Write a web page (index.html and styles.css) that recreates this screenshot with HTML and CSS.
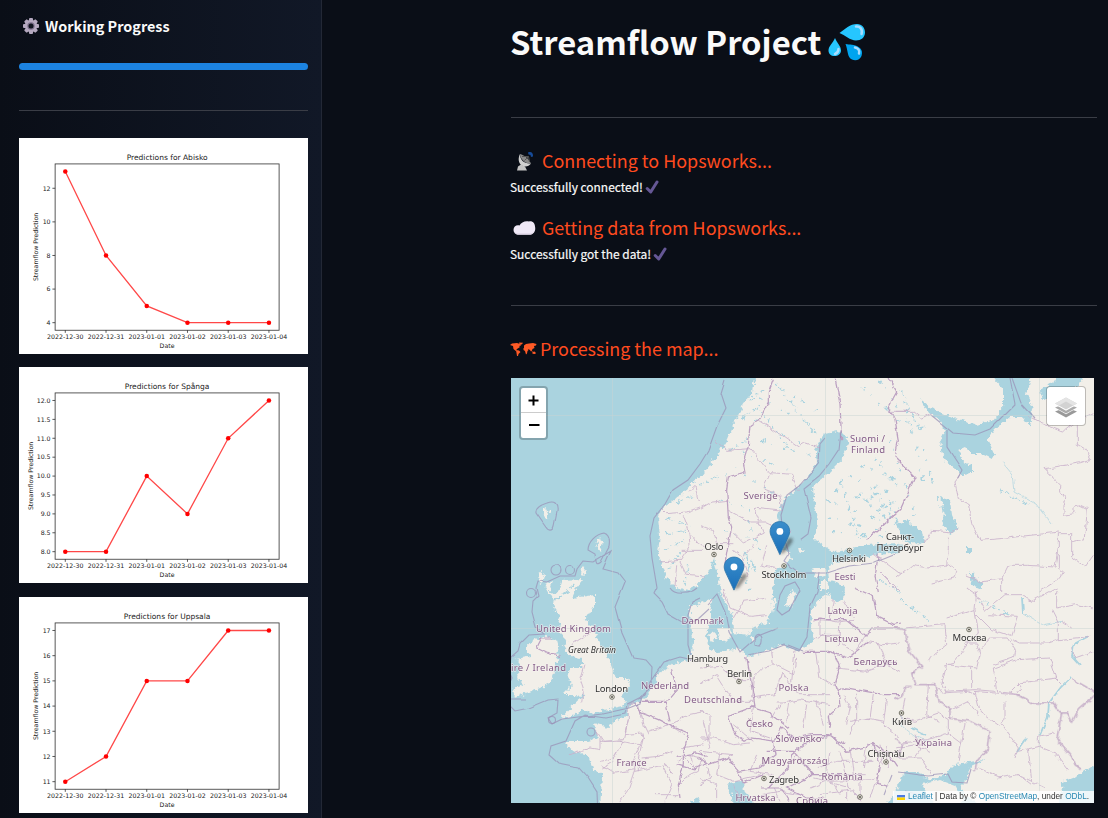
FILE: index.html
```html
<!DOCTYPE html>
<html lang="en">
<head>
<meta charset="utf-8">
<title>Streamflow Project</title>
<link rel="stylesheet" href="styles.css">
</head>
<body>
<div class="app">
  <aside class="sidebar">
    <h2 class="side-title">
      <svg class="gear" viewBox="0 0 18 18"><g fill="#b5a9c0"><rect x="7" y="1" width="4" height="16" rx="1"/><rect x="7" y="1" width="4" height="16" rx="1" transform="rotate(45 9 9)"/><rect x="7" y="1" width="4" height="16" rx="1" transform="rotate(90 9 9)"/><rect x="7" y="1" width="4" height="16" rx="1" transform="rotate(135 9 9)"/><circle cx="9" cy="9" r="6.2"/></g><circle cx="9" cy="9" r="3.7" fill="#7e728d"/><circle cx="9" cy="9" r="2.5" fill="#10141f"/></svg>
      <span>Working Progress</span>
    </h2>
    <div class="progress"></div>
    <hr class="rule side-rule">
    <div class="charts" id="charts"></div>
  </aside>
  <main class="main">
    <h1 class="title"><span>Streamflow Project</span>
      <svg class="drops" viewBox="0 0 38 38"><path d="M11.500 10C17 6 22 1 29 1c5 0 8 4 8 8.500c0 5-4 8-9 8C22 17.500 17 12 11.500 10z" fill="#26c6ff"/><path d="M7 15c-2 5-6.500 8-6.500 12.500C.5 31 3 33 6.500 33S13 31 13 27.500C13 23 9 20 7 15z" fill="#26c6ff"/><path d="M17.500 21c4 1 9 0 13 3 4 2.500 4 6 3 9-1.500 4-6 5-9.500 3.500-5-2-4-10-6.500-15.500z" fill="#00a4ef"/><path d="M28 3.500c4-.5 7 3 5.500 7.500M10.500 26c0 2.500-1 4-3.500 5M27 24.500c3 .5 5 3 4 6" fill="none" stroke="#a6dcff" stroke-width="2.500" stroke-linecap="round"/></svg>
    </h1>
    <hr class="rule">
    <section class="steps">
      <h3 class="step"><svg class="ico" viewBox="0 0 28 22"><path d="M6 20.500l1-4 3-2 4 2 2 4z" fill="#c4c4c4"/><path d="M9 4c0 6 4 10 11 9.500-2 3-6 4-9 2C7 13 7 8 9 4z" fill="#d0d0d0"/><path d="M9 4c4 1 8 4 11 9.500C14 14 9 9 9 4z" fill="#8b8b8b"/><path d="M11 6.500L17.500 6.500l1 5.500M17.500 6.500l-4 4" stroke="#555" fill="none"/><path d="M17 2.500c3-1.500 5.500.5 5 4l-2 .5-.5-2-2-.5z" fill="#164b99"/></svg><span>Connecting to Hopsworks...</span></h3>
      <p class="status"><span>Successfully connected!</span><svg class="check" viewBox="0 0 14 14"><path d="M2.200 8.500l3.500 3.500L12 2" fill="none" stroke="#655795" stroke-width="3" stroke-linecap="round" stroke-linejoin="round"/></svg></p>
      <h3 class="step second"><svg class="ico" viewBox="0 0 28 22"><path d="M2.500 13c0-3.500 3-5.500 6-4.500C10 5.500 14 3.500 18 4.500c3-1 6 1.500 6 5 1 4-1 8-5 8H8c-3 .5-5.500-1.500-5.500-4.500z" fill="#f0e9f7"/><path d="M4 15.500c2 1.500 4 .5 6 .8h9c2 0 3-1 4-2-1 3-2.500 3.500-5 3.500H8c-2 0-3.500-.8-4-2.300z" fill="#dfd6e8"/></svg><span>Getting data from Hopsworks...</span></h3>
      <p class="status"><span>Successfully got the data!</span><svg class="check" viewBox="0 0 14 14"><path d="M2.200 8.500l3.500 3.500L12 2" fill="none" stroke="#655795" stroke-width="3" stroke-linecap="round" stroke-linejoin="round"/></svg></p>
    </section>
    <hr class="rule">
    <h3 class="step map-step"><svg class="world" viewBox="0 0 27 16"><g fill="#ff5a26"><path d="M0 4l2-1.500 5-.5 3 1 1 1.500-2 .5 1 1-3 2-1 1.500 2 1-1 .500L3.500 8 3 5zM9 1.500l4 .2-1 1.500-2 .8zM6 9l3 .5 1.500 1.500-2 2-.5 2H7z"/><path d="M14 4.500l2-1.500 3-.500 4-.5 3.500 1-.5 1.500-2 .5.5 2-2 1-.5 1.500-1 1-1-1.500-2-1-.5 1.500-1-2-2.500 0zM13.500 7l3.500-.2 1.500 2.200-1 1-.5 2.500-1 1-1-3.500-1.500-1zM22.500 11l2-.5 1.500 1.500-1 1-2.500-.2zM20 9.500l3 1-.5.7z"/></g></svg><span>Processing the map...</span></h3>
    <div class="map">
      <svg class="tiles" viewBox="511 378 583 425">
        <defs>
          <filter id="coast" filterUnits="userSpaceOnUse" x="505" y="372" width="595" height="437"><feTurbulence type="fractalNoise" baseFrequency=".22" numOctaves="3" seed="4"/><feDisplacementMap in="SourceGraphic" scale="7" xChannelSelector="R" yChannelSelector="G"/><feGaussianBlur stdDeviation=".3"/></filter>
          <filter id="rough" filterUnits="userSpaceOnUse" x="505" y="372" width="595" height="437"><feTurbulence type="fractalNoise" baseFrequency=".14" numOctaves="2" seed="9"/><feDisplacementMap in="SourceGraphic" scale="5" xChannelSelector="R" yChannelSelector="G"/><feGaussianBlur stdDeviation=".25"/></filter>
          <filter id="wave" filterUnits="userSpaceOnUse" x="505" y="372" width="595" height="437"><feTurbulence type="fractalNoise" baseFrequency=".06" numOctaves="1" seed="2"/><feDisplacementMap in="SourceGraphic" scale="3" xChannelSelector="R" yChannelSelector="G"/><feGaussianBlur stdDeviation=".25"/></filter>
          <filter id="soft" x="-50%" y="-50%" width="200%" height="200%"><feGaussianBlur stdDeviation="1.800"/></filter>
          <linearGradient id="pinfill" x1="0" y1="0" x2="0" y2="1"><stop offset="0" stop-color="#3a8ecb"/><stop offset="1" stop-color="#1b6fb9"/></linearGradient>
          <g id="pin"><path d="M12 40L22 22c4-3 8-1 5 4L18 38z" fill="#222" opacity=".5" filter="url(#soft)"/><path d="M12.500.7C5.900.7.700 5.900.700 12.600c0 2.200.6 4 1.600 6.200L12.500 40.500l10.200-21.700c1-2.200 1.600-4 1.600-6.200C24.300 5.900 19.100.7 12.500.7z" fill="url(#pinfill)" stroke="#2d75aa"/><circle cx="12.500" cy="12.500" r="4.100" fill="#fff"/></g>
          <g id="town"><circle r="2.300" fill="#f2efe9" stroke="#555548" stroke-width=".8"/><circle r="1" fill="#555548"/></g>
        </defs>
        <rect x="511" y="378" width="583" height="425" fill="#aad3df"/>
        <g filter="url(#coast)" fill="#f2efe9">
          <!-- Scandinavia and the continent -->
          <path d="M756 370L753 392 743 405 735 422 728 439 720 452 707 469 702 476 692 483 688 489 675 499 662 509 658 519 660 535 658 552 662 565 667 579 675 587 688 590 698 585 705 575 711 569 714 558 717 572 721 592 725 601 732 615 733 633 750 635 752 628 767 623 772 605 775 572 787 565 792 557 783 549 780 535 778 515 783 502 797 487 810 475 817 462 815 450 825 434 837 431 848 437 847 449 840 462 827 475 813 487 815 505 817 522 815 539 823 545 833 552 850 550 867 545 882 544 898 543 905 547 900 552 877 554 857 560 833 562 828 569 829 580 837 582 845 588 844 600 836 603 828 594 817 602 812 610 811 628 814 640 800 651 790 648 780 645 760 653 747 656 740 648 727 650 720 653 709 648 705 635 710 625 710 612 712 602 713 597 704 602 689 607 691 621 693 641 692 655 687 660 672 665 660 671 655 685 645 698 630 705 627 716 615 721 608 728 600 725 595 723 598 738 588 741 568 741 566 744 572 751 588 755 593 768 602 775 600 810 1105 810 1105 370z"/>
          <!-- Britain, Ireland and small islands -->
          <path d="M545 585L553 581 550 592 557 595 562 580 583 579 577 587 572 598 595 595 595 605 585 620 593 628 600 645 608 656 613 671 615 678 628 678 630 685 622 695 627 701 623 706 605 710 592 713 582 710 572 716 560 719 577 701 585 696 572 695 563 695 573 685 568 678 570 668 582 668 582 658 569 656 563 646 567 640 558 631 560 618 555 610 552 598z"/>
          <path d="M533 640L545 636 556 641 559 652 555 666 552 682 541 688 528 693 515 697 513 690 524 684 517 677 522 667 516 659 531 656 525 649z"/>
          <path d="M600 538l3 4-2 8-3 1-2-5zM582 567l5 2-2 6-4-1zM543 509l4-1 2 4-1 7-2 0-3-5zM540 572l5 3-3 9-3-2zM708 635l6-3 3 7-5 2zM718 628l12 0 2 8-6 6-6-3zM785 605l6-14 5 3-6 12zM769 613l5-14 2 0-4 14zM812 568l13 0 1 7-11 2zM820 581l9 0-1 8-8 1zM798 548l5 0 1 3-5 2zM752 637l4 1-1 4-4-2z"/>
        </g>
        <g filter="url(#coast)" fill="#aad3df">
          <!-- White Sea -->
          <path d="M988 370L1003 389 1003 405 995 420 975 425 958 420 935 410 920 399 928 412 942 422 945 432 940 442 945 462 955 469 963 475 972 474 972 465 963 462 958 450 965 447 972 454 982 454 992 459 995 454 988 439 995 429 1010 417 1023 417 1030 427 1033 409 1027 395 1032 370z"/>
          <!-- Cheshskaya Bay, Onega, Ladoga -->
          <path d="M1058 370L1056 380 1040 390 1042 398 1052 403 1075 390 1088 372zM940 497L950 500 952 515 958 529 950 535 942 522 945 515zM898 524L907 520 922 532 924 542 915 545 902 539zM966 548l6 0 0 4-6 0zM970 571l12 14 0 4-10-4z"/>
          <!-- Black Sea, Azov, Adriatic, Caspian -->
          <path d="M885 810L895 792 905 772 918 772 932 781 945 774 955 764 985 760 970 767 967 778 960 785 965 795 985 810zM1058 810L1063 782 1078 776 1097 763 1097 810zM728 783l14-2 3 12 15 17-26 0zM690 801l8-4 6 12-18 0z"/>
        </g>
        <path filter="url(#rough)" fill="#f2efe9" d="M921 784l18-5 16 6 9 15-10 8-20-3-6-9z"/>
        <g filter="url(#coast)" fill="none" stroke="#aad3df" class="lakes">
          <path d="M760 398l40 22M755 420l48 25M762 440l50 16M742 452l45 18M775 384l45 28M716 480l25-15M745 475l30 20M720 500l30 10M748 520l12 30M725 530l45 15M738 560l12 30M862 388l40 35M880 380l30 45M905 400l20 90M890 440l25 75M860 440l40 50"/>
          <path stroke-width="2.200" d="M826 500l55 20M828 518l62 15M835 490l60 20M850 475l50 35M862 466l38 14M870 505l28 18M832 532l50 5M923 450l20 65M906 410l18 20M870 497l27 6M875 485l20 40M860 495l35 30M885 490l12 30"/>
          <path stroke-width="1.200" d="M666 518l25 8M664 534l24-4M664 550l22-10M675 503l19-7M668 570l14-20M684 586l5-24M700 485l20-10M730 450l20-12M742 418l18-12M750 400l14-10M880 580l20 12M900 600l30 20M1000 490l30 15M980 600l30 15M780 388l35 45M760 410l30 40M900 390l20 40M840 480l20 60" stroke-dasharray="5 2 2 4"/>
          <path stroke-width="1.600" d="M730 568l6 12M745 553l5 20M752 560l4 13M736 572l5 7" stroke-dasharray="none"/>
          <path stroke-width="1.600" d="M551 590l7 9M549 600l12-2M557 588l-4 20M575 585l-20 15" stroke-dasharray="6 3"/>
        </g>
        <g fill="none" stroke="#aad3df">
          <path stroke-width="1.800" filter="url(#rough)" d="M1089 636l-15 8-2 12 8 9M1071 677l-10 10-12 16-1 12-8 20M1027 738l-10 14M912 728l14 7M1022 598l1 15"/>
          <path stroke-width=".7" filter="url(#rough)" d="M1002 462l10 12 2 18 22 12 15 20M1023 613l20 12 20-4M902 711v15l12 10 14 5"/>
        </g>
        <!-- internal divisions, drawn tile by tile -->
        <g filter="url(#rough)" fill="none" class="region">
          <g transform="translate(505 372) scale(.333333)"><path d="M465 405l20 20 60-5 40-15M555 355l15-15 10 50M535 430l15 40 5 50-30 45-60 5M550 480l30 35 20 10M530 535l60 0M525 570l20 40 55 5M515 580l-5 60"/></g>
          <g transform="translate(700 372) scale(.333333)"><path d="M45 205l35 30 70-5M175 145l70 45 50 35 20-12 45 15M150 230l60 72 65 5 20 50M210 305l-20 45 50 20 10 50M85 385l-50 5-35 20M85 415l65 35 50 0 30 15M250 418l-90-10 30 75-60 30-30-30M0 460l40 15 10 40 50 0M100 535l25 20 20 60M160 520l-30 35M270 475l-30 55M200 520l-15 60 45 10M565 118l60 0M520 545l80 60M540 600l60 60"/></g>
          <g transform="translate(895 372) scale(.333333)"><path d="M0 118l55 0 25 20 30-15M400 130l35 20 70 27 15-12 75-40M547 160l0 57 25 15 15 30-30 10-110 18 20 20 30 30 0 20 15 20-5 20 0 30 30-5 0-20 20-5 20 10-5 60-5 30-35 10M195 310l-15 20 10 50 30 15 10 60 25 50 60-5 180-20M190 470l-20 10-60-5-20 35M160 500l0 30-5 50M0 620l50-40 50 8 60-10 25 20-5 20-70 15M210 610l50 20 60-10 20-40 60 0 80 5 10-60M490 485l0 100 15 15-10 20-65 40M490 485l40 0 0 70 40 30 25-35M320 620l0 40"/></g>
          <g transform="translate(505 588) scale(.333333)"><path d="M240 230l-15 50 10 30-5 30M200 170l60-40M275 430l20 30 60-5 15-60 0-45M195 500l60-20 30 5 0-35M285 460l70 0M285 520l40-10 30-50M325 520l-30 20M345 460l60 10 10-20-5-15-50 5 10-45M405 470l-20 45 5 30-60 10-40-25M390 545l-20 60-30 40M390 550l90-20 20 25M400 350l20 70 10 20M415 450l-15 60 0 40M430 430l60-20 50 30M500 490l-40 15-50 5M600 370l-50 10-50 30M525 480l70-10M520 520l30-20 40 10-10 40-40 20-20 20M450 620l70 0M540 510l30 30M560 500l10 50M470 530l30 60-20 50"/></g>
          <g transform="translate(700 588) scale(.333333)"><path d="M70 0l20 60 60 25 50-5M100 90l30-50 70-10M0 240l60-5 50 40 40 0M0 290l50-30 50 80 60 0M0 370l30 10 0 60-20 20M10 400l20 80M160 270l30-30 30-10-5-40M225 230l60 30 5-50M160 270l-5 60 70-10 20-70M245 250l50 70 100 0M285 190l-10 90M350 190l10 80 50 30M230 345l20 0 50-10 90 15M240 350l-25 40M270 340l-10 60M320 350l-10 70M350 340l20 70M100 410l60 50M160 360l-10 70 60 20M0 450l40 0 60 20 50-5M0 490l100 10M10 510l20 60-30 20M60 490l-10 70 50 20 80-20M0 570l50 20 0 50M100 590l20 50M340 100l20-8 50 10 50-5M360 92l0 50 60 0M420 100l-5 80M375 135l-30 20M400 150l60 40M430 40l30 50M400 35l-10 60M500 140l-20 30-30 40M500 160l50 10 50-5M540 170l20 60 40 20M410 240l90 10 90-30M430 320l20 40-10 50M470 320l0 70-20 50M520 320l-10 70-60 10M560 330l-10 80 50 40M500 390l50 10M330 600l50-20 70 20M390 490l-10 60 40 70M420 490l20 70 60 0M450 480l10 80M500 470l-10 70M350 540l60-20 110 0M340 570l50 10 130-5M440 560l0 80M480 560l0 70M530 570l-20 60M360 620l100-15 20 35M180 620l60-10 60 10M220 600l20 40M290 500l-30 40M170 500l-20 50 70 10M100 500l-40 20M560 470l5 70M540 470l10 60M515 480l30 20 60-10"/></g>
          <g transform="translate(895 588) scale(.333333)"><path d="M30 120l120-10 5 60-40 30-15 20M155 90l85-25 10 70-30 30-45 60-30 10M245 80l45 45 60 20 20-60-90-5M245 10l-5 55M240 10l30 60 60-50 50 0M215 0l30 20M380 20l30 20 75-40M485 60l0-50M485 60l60-10 50 10M210 165l35 0 10 35-10 40-90-10M255 185l35-35 50 0 20 30-5 30-60 20M295 240l70-25M295 240l10 70 70 10M155 230l-15 60 10 20 90-5 60 5M230 240l0 60M350 155l20 10 90 0M460 165l30-10 0-50-20-40M490 155l100-10M500 100l30 20M530 180l10 30 55-20M365 215l100-5 20 60-110 15-30 30M370 285l10 15-15 20M480 270l20 20M365 320l-130-10M240 310l15 60 60 45M130 300l0 0 10 15 80-5 20 10M100 290l-5 90 35 20M30 330l-10 60 40 10 70-25 30 20 0 40-60 20-80 10M60 440l20 40-20 30M160 435l40 30 10-60M200 465l-10 50M160 370l60-30 30 40M330 390l-10 20 50 70-10 30M330 390l0-50M370 490l60-15 0-30 50-10M430 475l50 20 40 50M400 480l10 100M310 570l60-10 80 40M370 560l40 30M250 540l70 30M0 480l60-10 45 20M0 510l80 0 30 50"/></g>
        </g>
        <g filter="url(#rough)" fill="none" class="country">
          <g transform="translate(700 372) scale(.333333)"><path d="M220 20l-15 40 0 30-25 50-30 20-5 60-15 50 5 30-50 15-5 40 5 80 10 30-10 50-10 60 20 40M405 20l15 75 5 110M560 0l30 60-25 45 20 40 10 60-10 50 60 60-45 100-100 90M535 545l-10 70 10 45"/></g>
          <g transform="translate(505 588) scale(.333333)"><path d="M165 205l-40-10-30-15 15-30 30 0M370 345l20 0 20 30 50 20 40 20 50 20-15 60 0 35-15 60 5 40M405 340l80 0 30-35-15-60M480 335l15 65M515 530l50 15 40-20M515 505l60-10 30 10"/></g>
          <g transform="translate(700 588) scale(.333333)"><path d="M140 205l10 60 15 90-80 30 20 55 30 20 20-10 70 10 20-40 40 30 50-10 50 0 50 30M150 355l60 20 60 45M390 420l-5-35 35-30-5-40-10-25 15-50-20-50M305 190l80 0 60 20 60-50M340 95l100 0 60 50M465 0l55 25 10 60 50 25 20-5M500 140l15-20 85 0M410 310l30-10 110 20 50 0M390 440l50 50 60-15 20-10 50 40 20 30M215 450l10 50-50 40-60 10-30-40-60 20-30-20M275 500l50-40 70-20M275 500l-10 40-60 60M340 560l-80 40 60 30 50 0M520 465l20 60-10 60 35 10M200 490l80 0 60 70 100 0M110 550l20 35 60-25M180 600l60 0 30 40"/></g>
          <g transform="translate(895 588) scale(.333333)"><path d="M0 120l30 5 10 60 40 50-30 20 10 35 60 0 10 50 35 20 0 30 60 10 60 30-5 50-35 40-5 30M0 335l20-10 10-30 20 0M365 320l50 25 60 0 20 30 20 0 15 30 20-40 35-30 20-20-70-40M60 255l-10 0M500 375l-15 80 45 50 10 25 20 15M0 450l20 20-10 40"/></g>
        </g>
        <g filter="url(#wave)" fill="none" class="maritime">
          <path d="M725 380l-4 13 5 15-9 18-9 25-8 13-12 16-15 10-8 14-11 14-4 18 2 22 5 30-3 6 8 8 6 12 14 8 14-1 13-12M547 503c8-3 11 1 10 8l-3 15c-2 6-6 5-9 0l-9-13c-1-5 5-8 11-10zM604 533c6 2 6 8 5 14l-8 15c-6 5-5-2-6-8l-7-4c0-8 8-16 16-17M593 562l-10-1-6 8-2 7-15 0-13 6-9-1-2 7 2 8-5 5-1 11 4 15 8 7-15 1-9 9-2 7-7 6-2 14 3 7-6 12-2 10 11 11 14-3 19-8 10-1-1 14-9 5 4 6 10-5 40-5 27-6 12-5 2-8 8-8 1-20-6-7-13-2-11-25-7-26 10-25-7-9-15-4 5-12 3-6zM511 699l14 0M825 438l-5 6-1 18-13 16-7 8-12 9-6 20 2 20 6 18-5 8 15 12 28 0 22-7 25-3 22-9M841 431l-2 18-10 15-10 12-15 12 7 30-3 16-8 6M778 628l-20 8-18 16-11-20-4-20-8-18-9 10M780 595l-3 15 5 5 8-5 10-20-5-8-10 4zM820 572l-3 20-7 15-3 30-8 14-15-6-15 6-22 4M693 660l-13-3-16 5-14 20-5 13-18 9-2 10-20 4-20-3-10 6-9 20-15 5-2 9 9 8 20 4 10 11 9 14 1 25M755 640c0-6 5-8 7-2 1 8-3 10-7 6zM691 655l-3-10 0-30 4-13 8-4M788 645l15 6"/>
          <circle cx="556" cy="570" r="5"/><circle cx="570" cy="570" r="4.500"/><circle cx="531" cy="593" r="4.500"/><circle cx="552" cy="720" r="3.500"/><circle cx="591" cy="732" r="4"/>
          <path d="M670 588c5 8 20 6 27 0M1010 378l5 26-25 25-15 6-22-2-22-18M947 430l0 17 15 23-4 8M1012 378l9 25 14 15M898 772l30 4 20-2 4 8 15 1 4-14M905 791l25 7M892 775l-8 20"/>
        </g>
        <g stroke="#ccd5d2" stroke-width=".7" opacity=".7"><path d="M612.500 378V803M825.500 378V803M1039.500 378V803M511 415.500H1094M511 628.500H1094"/></g>
        <g class="lbl place">
          <text x="850" y="441.500" textLength="35">Suomi /</text><text x="851" y="452.500" textLength="34">Finland</text><text x="743.500" y="499" textLength="34">Sverige</text><text x="834.500" y="579.500" textLength="21">Eesti</text><text x="827.500" y="613.500" textLength="30">Latvija</text><text x="824.500" y="641.500" textLength="34">Lietuva</text><text x="853.500" y="664.500" textLength="44">Беларусь</text><text x="681.500" y="624" textLength="42">Danmark</text><text x="536" y="632" textLength="75">United Kingdom</text><text x="511" y="670.500" textLength="55">ire / Ireland</text><text x="641" y="689" textLength="48">Nederland</text><text x="684" y="703" textLength="58">Deutschland</text><text x="778.500" y="691" textLength="30">Polska</text><text x="746" y="726.500" textLength="27">Česko</text><text x="775.500" y="742" textLength="46">Slovensko</text><text x="761.500" y="763.500" textLength="66">Magyarország</text><text x="821.500" y="779.500" textLength="41">România</text><text x="735.500" y="801" textLength="40">Hrvatska</text><text x="796" y="804" textLength="32">Србија</text><text x="616.500" y="765.500" textLength="30">France</text><text x="915" y="745.500" textLength="37">Україна</text>
        </g>
        <g class="lbl city">
          <text x="704.500" y="549.500" textLength="19">Oslo</text><text x="761.500" y="577.500" textLength="45">Stockholm</text><text x="832" y="561.500" textLength="34">Helsinki</text><text x="886" y="540" textLength="28">Санкт-</text><text x="876.500" y="551" textLength="47">Петербург</text><text x="687" y="662" textLength="41">Hamburg</text><text x="727" y="676.500" textLength="25">Berlin</text><text x="595" y="692" textLength="33">London</text><text x="769" y="782.500" textLength="30">Zagreb</text><text x="867.500" y="757" textLength="37">Chișinău</text><text x="892" y="724.500" textLength="20">Київ</text><text x="952.500" y="640.500" textLength="34">Москва</text><text x="568" y="652.500" textLength="48" class="isle">Great Britain</text>
        </g>
        <use href="#town" x="714" y="554.500"/><use href="#town" x="784" y="566"/><use href="#town" x="849.500" y="550.500"/><use href="#town" x="739" y="681.500"/><use href="#town" x="612" y="697"/><use href="#town" x="764" y="778.500"/><use href="#town" x="886" y="762"/><use href="#town" x="901.500" y="713"/><use href="#town" x="969" y="629.500"/><use href="#town" x="860" y="797"/><rect x="706.500" y="664.500" width="2" height="2" fill="#f2efe9" stroke="#777" stroke-width=".6"/>
        <use href="#pin" transform="translate(769.500 521) scale(.83)"/><use href="#pin" transform="translate(723.600 556.500) scale(.83)"/>
      </svg>
      <div class="zoom"><span class="zbtn"><svg viewBox="0 0 25 25"><path d="M7.500 12.500h10M12.500 7.500v10" stroke="#000" stroke-width="2"/></svg></span><span class="zbtn"><svg viewBox="0 0 25 25"><path d="M8 12h10.500" stroke="#000" stroke-width="2"/></svg></span></div>
      <div class="layers"><svg viewBox="0 0 26 26"><path d="M2 17.500l11 6 11-6-11-4z" fill="#999"/><path d="M2 14l11 6.200L24 14l-11-4z" fill="#fff"/><path d="M2 13.500l11 6 11-6-11-4z" fill="#aaa"/><path d="M2 10.500l11 6.200 11-6.200z" fill="#fff"/><path d="M2 9.500l11-6 11 6-11 6z" fill="#d2d2d2"/><path d="M2 9.500l11-6 11 6-4 2-7-4-7 4z" fill="#e4e4e4"/></svg></div>
      <div class="credit"><svg class="flag" viewBox="0 0 8 5"><path fill="#4c7be1" d="M0 0h8v2.500H0z"/><path fill="#ffd500" d="M0 2.500h8V5H0z"/></svg><span><a>Leaflet</a> | Data by © <a>OpenStreetMap</a>, under <a>ODbL</a>.</span></div>
    </div>
  </main>
</div>
<script src="charts.js"></script>
</body>
</html>
```
FILE: styles.css
```css
* { box-sizing: border-box; }
body { margin: 0; background: #0a0e17; color: #fafafa; font-family: "Noto Sans CJK SC", "Open Sans", sans-serif; }
h1, h2, h3, p { margin: 0; }
.app { display: flex; height: 818px; overflow: hidden; }
.sidebar { flex: none; width: 322px; padding: 13px 13px 0 19px; background: linear-gradient(90deg, #0a0e17, #111827); border-right: 1px solid #232836; }
.side-title { display: flex; align-items: center; gap: 5px; height: 26px; padding-left: 3px; font-size: 14.400px; line-height: 26px; font-weight: 700; white-space: nowrap; }
.gear { width: 18px; height: 18px; }
.progress { height: 7px; margin-top: 24px; border-radius: 4px; background: #1c83e1; }
.rule { height: 1px; margin: 0; border: 0; background: #3a3d46; }
.side-rule { margin-top: 40px; }
.charts { display: flex; flex-direction: column; gap: 13px; padding-top: 27px; }
.chart { display: block; width: 289px; height: 216px; background: #fff; font: 13.890px "DejaVu Sans", sans-serif; fill: #222; }
.chart:last-child { margin-top: 1px; }
.chart .heading { font-size: 16.670px; }
.chart .frame { fill: none; stroke: #333; stroke-width: 1.800; }
.chart .line { fill: none; stroke: #f00; stroke-width: 2.900; stroke-opacity: .72; }
.chart .dot { fill: #f00; }
.main { flex: 1; padding: 0 11px 0 189px; }
.title { display: flex; align-items: center; gap: 7px; height: 117px; padding-bottom: 33px; font-size: 32.800px; line-height: 50px; font-weight: 700; white-space: nowrap; }
.title span { margin: -3px 0 0 -1px; }
.drops { width: 38px; height: 38px; }
.steps { height: 187px; padding-top: 30px; }
.step { display: flex; align-items: center; height: 26px; font-size: 17.930px; line-height: 26px; font-weight: 400; color: #ff4b1f; white-space: nowrap; }
.step span { margin-top: -2px; }
.step.second { margin-top: 15px; }
.ico { width: 28px; height: 22px; margin-right: 3px; }
.world { width: 27px; height: 16px; margin: 0 3px 0 -1px; }
.map-step { margin-top: 30px; }
.status { display: flex; align-items: center; gap: 2px; height: 26px; margin-left: -1px; font-size: 11.950px; line-height: 26px; white-space: nowrap; -webkit-text-stroke: .2px #fafafa; }
.check { width: 14px; height: 14px; }
.map { position: relative; width: 583px; height: 425px; margin-top: 16px; overflow: hidden; }
.tiles { display: block; width: 583px; height: 425px; }
.lakes { stroke-width: 1.500; stroke-dasharray: 3 7 1 12 2 5 4 14; }
.region { stroke: #c9b1cb; stroke-width: 2.500; }
.country { stroke: #bb9fc1; stroke-width: 3.700; }
.maritime { stroke: #9a91b7; stroke-opacity: .75; stroke-width: 1.100; }
.lbl { font: 9.500px "Noto Sans", sans-serif; paint-order: stroke; stroke: #f6f3ef; stroke-opacity: .65; stroke-width: 1.500px; stroke-linejoin: round; }
.place { fill: #835b87; }
.city { fill: #333; }
.isle { font-style: italic; font-size: 8.500px; }
.zoom { position: absolute; left: 8px; top: 8px; width: 29px; height: 54px; border: 2px solid rgba(0, 0, 0, .22); border-radius: 4px; background: #fff; background-clip: padding-box; }
.zbtn { display: block; height: 25px; }
.zbtn:first-child { height: 24px; }
.zbtn + .zbtn { border-top: 1px solid #ccc; }
.zbtn svg { display: block; width: 25px; height: 25px; }
.layers { position: absolute; right: 8px; top: 8px; width: 40px; height: 40px; padding: 7px 6px; border: 1.500px solid rgba(0, 0, 0, .22); border-radius: 4px; background: #fff; background-clip: padding-box; }
.layers svg { display: block; width: 26px; height: 26px; }
.credit { position: absolute; right: 0; bottom: 0; display: flex; align-items: center; gap: 3px; width: 201px; height: 12px; padding-left: 4px; background: rgba(255, 255, 255, .8); color: #333; font: 8.280px/12px "Liberation Sans", sans-serif; white-space: nowrap; }
.credit a { color: #2888b3; }
.flag { width: 8px; height: 5px; }
```
FILE: charts.js
```js
const DATES = ["2022-12-30", "2022-12-31", "2023-01-01", "2023-01-02", "2023-01-03", "2023-01-04"];
const SERIES = [
  { name: "Abisko", values: [13, 8, 5, 4, 4, 4], ticks: [4, 6, 8, 10, 12], digits: 0, labelX: 43 },
  { name: "Spånga", values: [8, 8, 10, 9, 11, 12], ticks: [8, 8.5, 9, 9.5, 10, 10.5, 11, 11.5, 12], digits: 1, labelX: 30 },
  { name: "Uppsala", values: [11, 12, 15, 15, 17, 17], ticks: [11, 12, 13, 14, 15, 16, 17], digits: 0, labelX: 43 }
];
const xAt = i => 102.5 + i * 90.2;

function chart(s) {
  const lo = Math.min(...s.values), hi = Math.max(...s.values);
  const yAt = v => 410.4 - (v - lo) / (hi - lo) * 336;
  const pts = s.values.map((v, i) => [xAt(i), yAt(v)]);
  return `<svg class="chart" viewBox="0 0 640 480" preserveAspectRatio="none">
    <text class="heading" x="328" y="49" text-anchor="middle">Predictions for ${s.name}</text>
    <rect class="frame" x="80" y="57.6" width="496" height="369.6"/>
    ${DATES.map((d, i) => `<path class="frame" d="M${xAt(i)} 427v6"/><text x="${xAt(i)}" y="447.5" text-anchor="middle">${d}</text>`).join("")}
    ${s.ticks.map(t => `<path class="frame" d="M80 ${yAt(t)}h-6"/><text x="70" y="${yAt(t) + 5}" text-anchor="end">${t.toFixed(s.digits)}</text>`).join("")}
    <text x="328" y="466.5" text-anchor="middle">Date</text>
    <text transform="translate(${s.labelX} 242) rotate(-90)" text-anchor="middle">Streamflow Prediction</text>
    <polyline class="line" points="${pts.join(" ")}"/>
    ${pts.map(p => `<circle class="dot" cx="${p[0]}" cy="${p[1]}" r="5"/>`).join("")}
  </svg>`;
}
document.getElementById("charts").innerHTML = SERIES.map(chart).join("");
```
